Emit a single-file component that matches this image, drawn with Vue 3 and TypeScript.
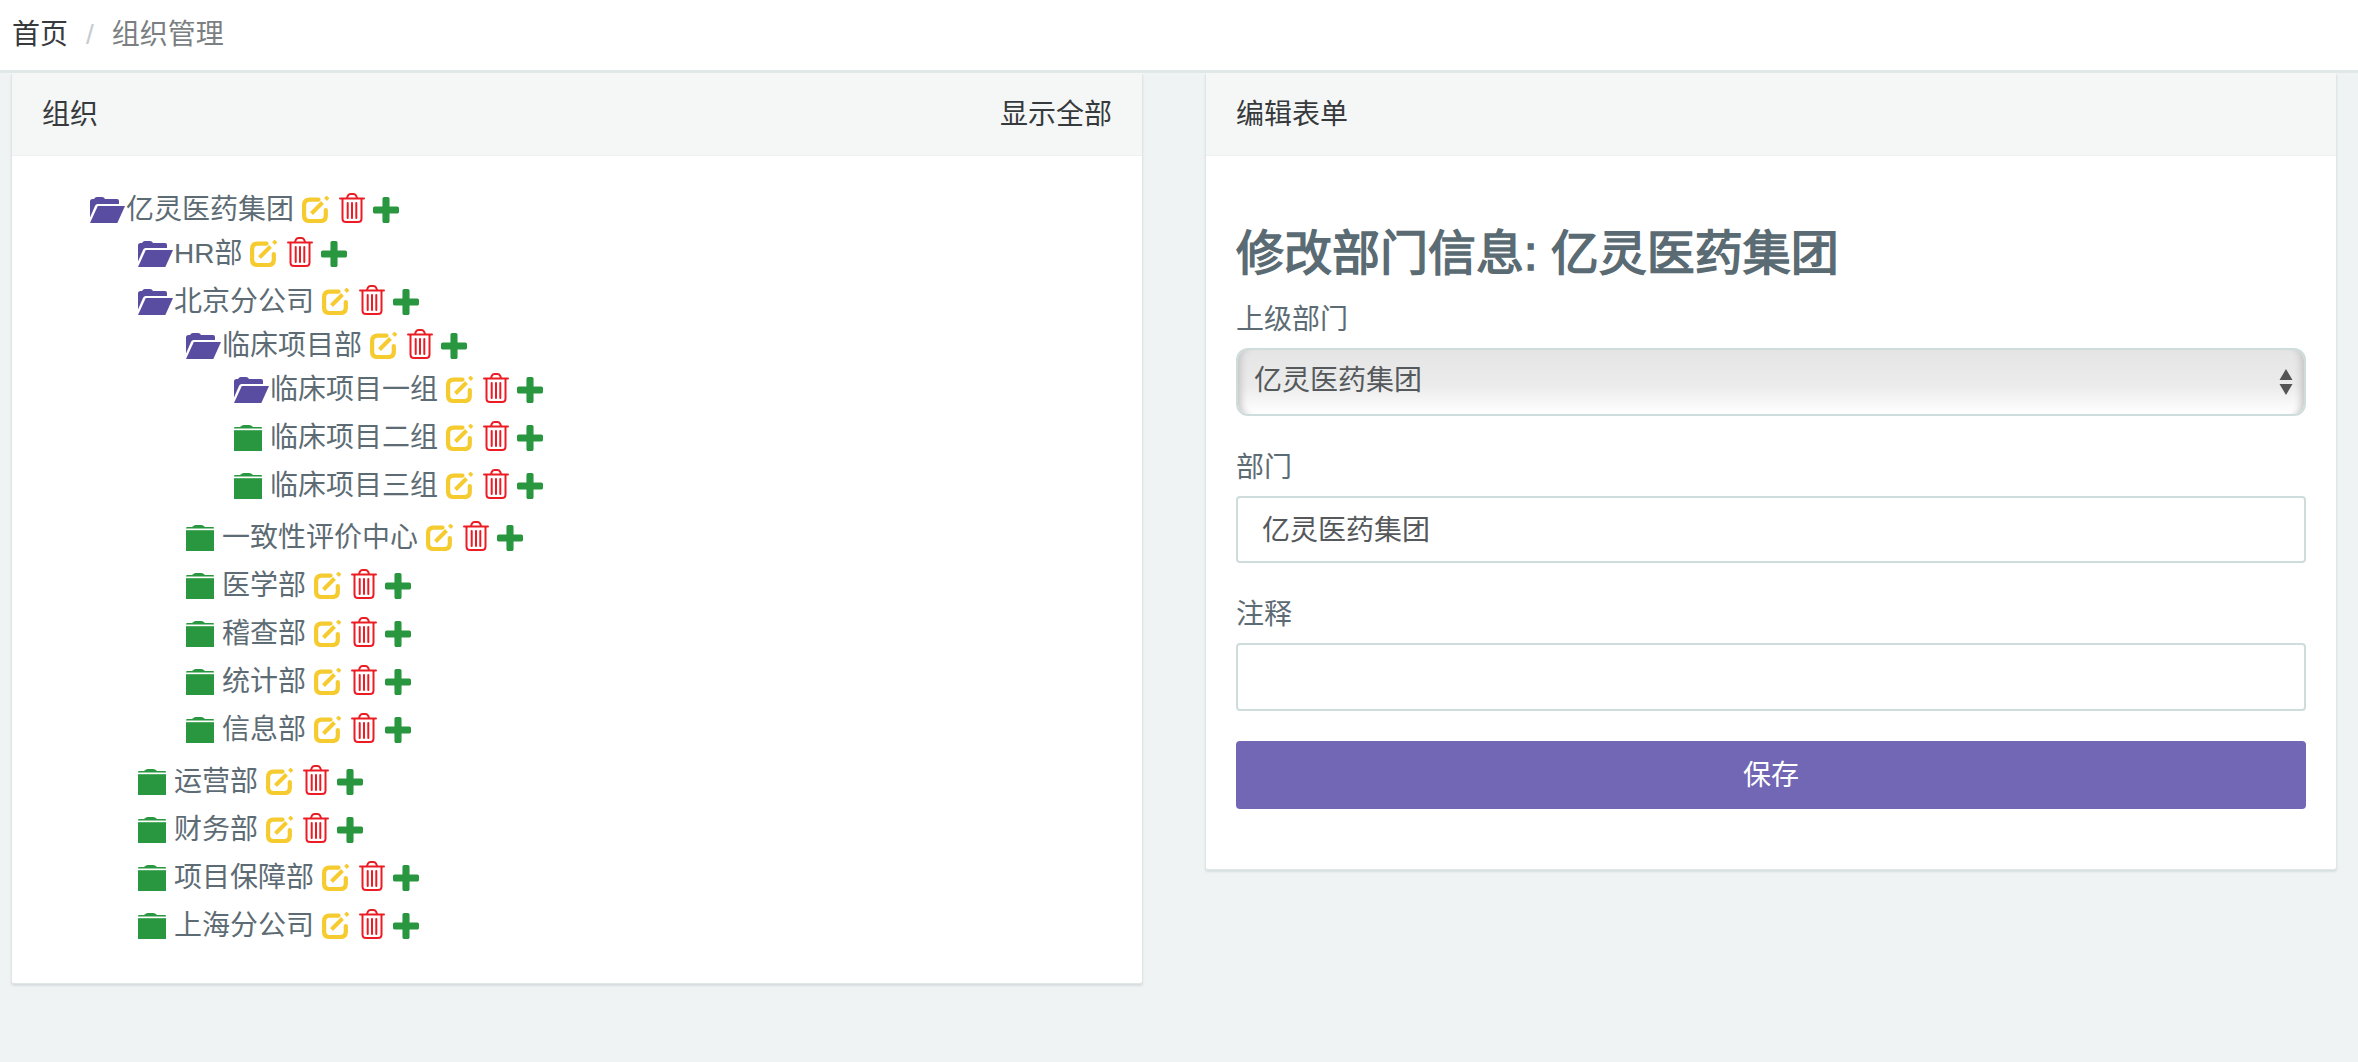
<script setup lang="ts">
interface TreeRow {
  name: string
  depth: number
  open: boolean
  after: number
}

const rows: TreeRow[] = [
  { name: '亿灵医药集团', depth: 0, open: true, after: 0 },
  { name: 'HR部', depth: 1, open: true, after: 4 },
  { name: '北京分公司', depth: 1, open: true, after: 0 },
  { name: '临床项目部', depth: 2, open: true, after: 0 },
  { name: '临床项目一组', depth: 3, open: true, after: 4 },
  { name: '临床项目二组', depth: 3, open: false, after: 4 },
  { name: '临床项目三组', depth: 3, open: false, after: 8 },
  { name: '一致性评价中心', depth: 2, open: false, after: 4 },
  { name: '医学部', depth: 2, open: false, after: 4 },
  { name: '稽查部', depth: 2, open: false, after: 4 },
  { name: '统计部', depth: 2, open: false, after: 4 },
  { name: '信息部', depth: 2, open: false, after: 8 },
  { name: '运营部', depth: 1, open: false, after: 4 },
  { name: '财务部', depth: 1, open: false, after: 4 },
  { name: '项目保障部', depth: 1, open: false, after: 4 },
  { name: '上海分公司', depth: 1, open: false, after: 0 },
]
</script>

<template>
  <div class="page">
    <nav class="crumbs">
      <a class="crumb-home">首页</a>
      <span class="crumb-sep">/</span>
      <span class="crumb-current">组织管理</span>
    </nav>

    <main class="columns">
      <section class="card">
        <header class="card-head">
          <span>组织</span>
          <a>显示全部</a>
        </header>
        <div class="tree">
          <div
            v-for="row in rows"
            :key="row.name"
            class="tree-row"
            :style="{ marginLeft: row.depth * 48 + 'px', marginBottom: row.after + 'px' }"
          >
            <span class="folder-box">
              <svg v-if="row.open" class="folder-open" width="35" height="26" viewBox="0 0 35 26">
                <path d="M0 20.500V4.500Q0 2 2.500 2H4L5 .800Q5.700 0 7 0H12Q13.400 0 14 .800L15 2H27Q29 2 29 4V7H7.500Q6 7 5.200 8.500Z" />
                <path d="M7.800 9H35L27.300 26H0Z" />
              </svg>
              <svg v-else class="folder-closed" width="28" height="26" viewBox="0 0 28 26">
                <path d="M0 3.500V3Q0 2 1.500 2H6L8 .500Q8.700 0 10 0H15Q16.500 0 17.500 .800L19 2H27Q28 2 28 3V3.500Z" />
                <path d="M0 5.200H28V26H0Z" />
              </svg>
            </span>
            <span class="name">{{ row.name }}</span>
            <svg class="ic-edit" width="27" height="27" viewBox="0 0 27 27">
              <path d="M16.500 3.600H7.500Q2.100 3.600 2.100 9.200V19.800Q2.100 25 7.500 25H18.500Q23.800 25 23.800 19.800V14" />
              <path d="M9.500 17.500L20.500 6.500" class="pencil" />
              <path d="M23.500 3.500L26 1" class="pencil" />
            </svg>
            <svg class="ic-trash" width="26" height="30" viewBox="0 0 26 30">
              <path d="M8 5L9 2.500Q9.800 1 11.500 1H14.500Q16.200 1 17 2.500L18 5" />
              <path d="M1 5.500H25" />
              <path d="M3.500 6V25.500Q3.500 29 7 29H19Q22.500 29 22.500 25.500V6" />
              <path d="M8.700 10V25M13 10V25M17.300 10V25" />
            </svg>
            <svg class="ic-plus" width="26" height="26" viewBox="192 128 1408 1408">
              <path d="M1600 736v192q0 40-28 68t-68 28h-416v416q0 40-28 68t-68 28h-192q-40 0-68-28t-28-68v-416h-416q-40 0-68-28t-28-68v-192q0-40 28-68t68-28h416v-416q0-40 28-68t68-28h192q40 0 68 28t28 68v416h416q40 0 68 28t28 68z" />
            </svg>
          </div>
        </div>
      </section>

      <section class="card card-form">
        <header class="card-head">
          <span>编辑表单</span>
        </header>
        <form class="form" @submit.prevent>
          <h3>修改部门信息: 亿灵医药集团</h3>
          <div class="group">
            <label>上级部门</label>
            <div class="select-wrap">
              <select>
                <option>亿灵医药集团</option>
              </select>
              <svg class="arrows" width="14" height="26" viewBox="0 0 14 26">
                <path d="M7 0L13.500 11H.500ZM7 26L.500 15H13.500Z" />
              </svg>
            </div>
          </div>
          <div class="group">
            <label>部门</label>
            <input type="text" value="亿灵医药集团" />
          </div>
          <div class="group">
            <label>注释</label>
            <input type="text" />
          </div>
          <button type="submit">保存</button>
        </form>
      </section>
    </main>
  </div>
</template>

<style>
html,
body {
  margin: 0;
  background: #eff3f4;
}
</style>

<style scoped>
.page {
  min-height: 100vh;
  background: #eff3f4;
  font-family: "Liberation Sans", "Noto Sans CJK SC", sans-serif;
  font-size: 28px;
  line-height: 42px;
  color: #5d6c74;
  box-sizing: border-box;
}

.crumbs {
  display: flex;
  align-items: center;
  height: 70px;
  padding-left: 12px;
  background: #fff;
  border-bottom: 3px solid #e1e8e8;
}
.crumb-home {
  color: #373a3c;
}
.crumb-sep {
  margin: 0 18px;
  color: #c6cccf;
}
.crumb-current {
  color: #7b7f82;
}

.columns {
  display: grid;
  grid-template-columns: 1132px 1132px;
  column-gap: 62px;
  align-items: start;
  padding: 0 21px 0 11px;
}

.card {
  background: #fff;
  border: 1px solid #dfe6e6;
  border-top: 0;
  border-radius: 3px;
  box-shadow: 0 2px 2px rgba(160, 175, 175, 0.3);
  box-sizing: border-box;
}

.card-head {
  display: flex;
  justify-content: space-between;
  align-items: center;
  height: 83px;
  padding: 2px 30px 0;
  background: #f5f7f7;
  border-bottom: 1px solid #edf1f1;
  color: #373a3c;
  box-sizing: border-box;
}

.tree {
  padding: 32px 0 35px 78px;
}
.tree-row {
  display: flex;
  align-items: flex-end;
  height: 44px;
  padding-bottom: 9px;
  box-sizing: border-box;
}
.folder-box {
  display: block;
  flex: none;
  width: 36px;
  height: 26px;
}
.folder-box svg {
  display: block;
}
.folder-open path {
  fill: #594da1;
}
.folder-closed path {
  fill: #29973f;
}
.name {
  align-self: center;
  margin-top: 9px;
  line-height: 44px;
  white-space: nowrap;
}
.ic-edit {
  flex: none;
  margin-left: 8px;
  fill: none;
  stroke: #f5cb30;
  stroke-width: 4.2;
  stroke-linecap: round;
}
.ic-edit .pencil {
  stroke-width: 4;
  stroke-linecap: butt;
}
.ic-trash {
  flex: none;
  margin-left: 10px;
  fill: none;
  stroke: #ec1c24;
  stroke-width: 2;
  stroke-linecap: round;
}
.ic-plus {
  flex: none;
  margin-left: 8px;
  fill: #29973f;
}

.form {
  padding: 71px 30px 60px;
}
.form h3 {
  margin: 0 0 16px;
  font-size: 48px;
  line-height: 53px;
  font-weight: 400;
  -webkit-text-stroke: 1.5px #5a6b73;
  color: #5a6b73;
}
.group {
  margin-bottom: 28px;
}
.group label {
  display: block;
  padding-top: 3px;
  margin-bottom: 7px;
}
.select-wrap {
  position: relative;
}
select,
input {
  display: block;
  width: 100%;
  height: 67.5px;
  box-sizing: border-box;
  font: inherit;
  color: #55595c;
  border: 2px solid #cfdcdc;
  outline: none;
}
select {
  padding: 0 40px 2px 16px;
  appearance: none;
  border-radius: 12px;
  background: linear-gradient(#e5e5e5, #ebebeb 55%, #fff);
  box-shadow: inset 9px 0 7px -6px #c4c4c4, inset -9px 0 7px -6px #c4c4c4;
}
.arrows {
  position: absolute;
  right: 13px;
  top: 21px;
  fill: #555;
}
input {
  padding: 0 24px 2px;
  border-radius: 4px;
  background: #fff;
}
button {
  display: block;
  width: 100%;
  height: 68px;
  margin-top: 30.5px;
  padding: 2px 0 0;
  border: 0;
  border-radius: 4px;
  background: #7267b4;
  color: #fff;
  font: inherit;
}
</style>
